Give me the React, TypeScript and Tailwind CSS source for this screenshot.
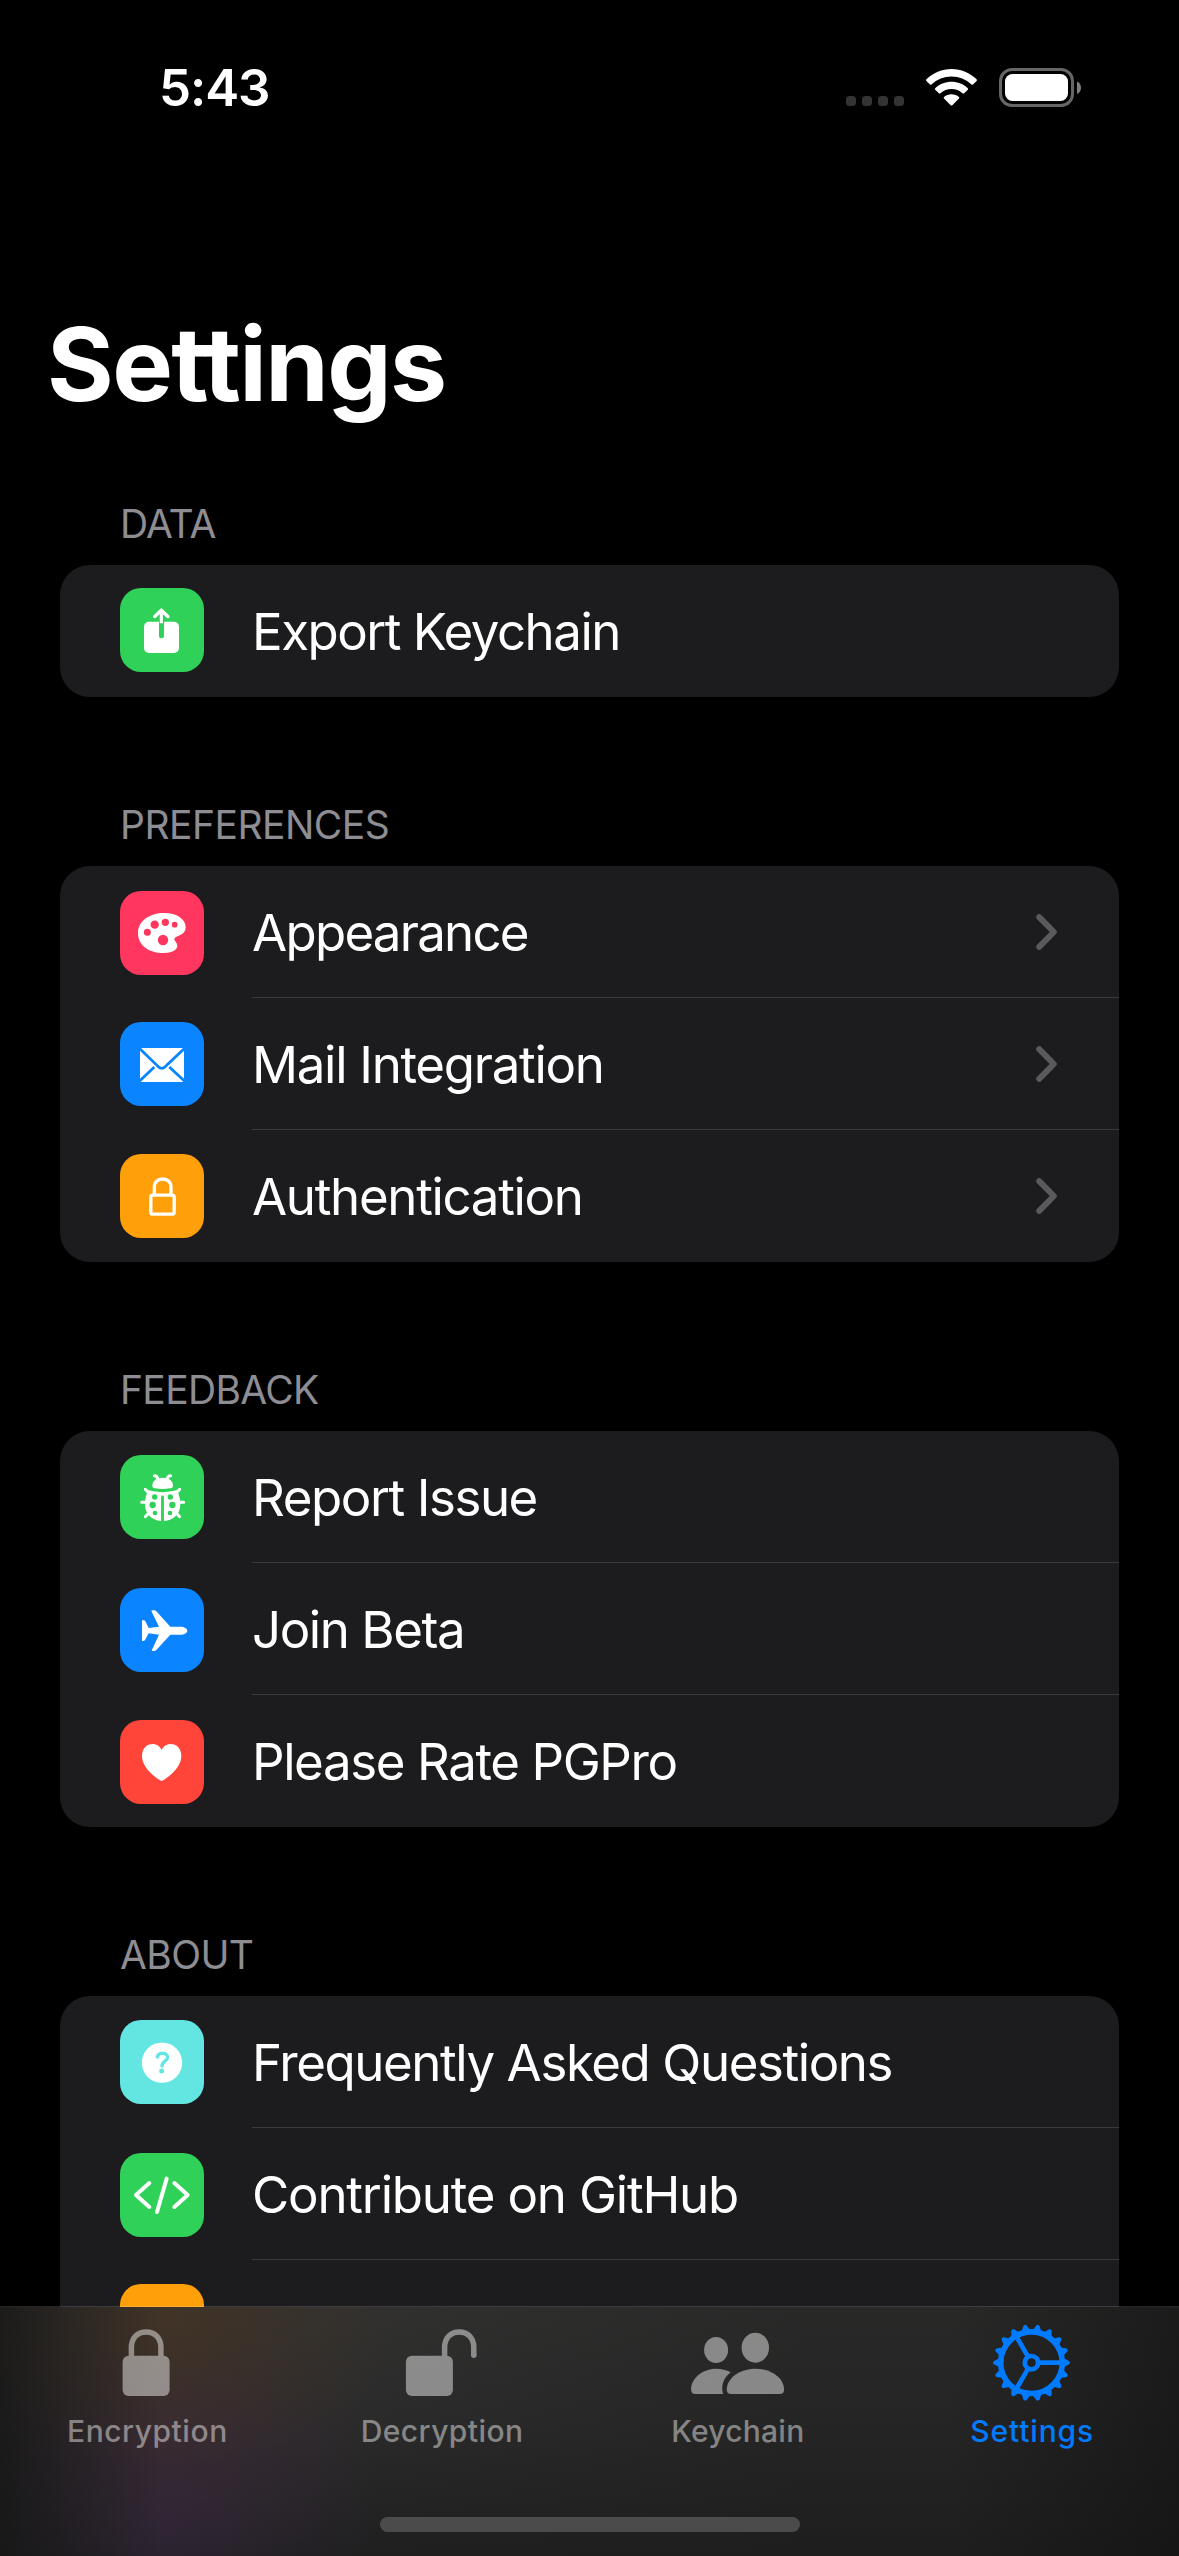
import type { ReactNode } from "react";

const ExportIcon = () => (
  <>
    <rect x="72" y="101" width="105" height="94" rx="15" fill="white" />
    <path d="M124.500 98V143" stroke="#30d158" strokeWidth="15" strokeLinecap="round" />
    <path d="M124 106V68M104 86L124 66L144 86" stroke="white" strokeWidth="9.500" strokeLinejoin="round" fill="none" />
    <path d="M104 86L124 67L144 86" stroke="white" strokeWidth="9.500" strokeLinecap="round" strokeLinejoin="round" fill="none" />
  </>
);

const PaletteIcon = () => (
  <>
    <path
      fill="white"
      d="M133 66C170 66 197 84 197 109C197 127 182 132 170 137C161 141 162 146 167 152C180 167 168 186 130 186C85 186 54 163 54 126C54 90 88 66 133 66Z"
    />
    <g fill="#ff375f">
      <circle cx="82" cy="124" r="10.500" />
      <circle cx="104" cy="101" r="12.500" />
      <circle cx="136" cy="94" r="11" />
      <circle cx="164" cy="101" r="8.500" />
      <circle cx="129" cy="147" r="15.500" />
    </g>
  </>
);

const MailIcon = () => (
  <>
    <rect x="60" y="78" width="132" height="102" rx="5" fill="white" />
    <path
      d="M58 79L111 130Q125 148 140 130L194 79M58 178L103 135M194 178L148 135"
      stroke="#0a84ff"
      strokeWidth="8.500"
      fill="none"
    />
  </>
);

const LockIcon = () => (
  <g fill="none" stroke="white" strokeWidth="10">
    <rect x="92.500" y="123.500" width="70" height="57" rx="6" />
    <path d="M103 122V100C103 84 113 75 128 75C143 75 153 84 153 100V122" />
  </g>
);

const LadybugIcon = () => (
  <>
    <g stroke="white" strokeWidth="9" strokeLinecap="round" fill="none">
      <path d="M103 62Q112 62 114 73M152 62Q143 62 141 73" />
      <path d="M65 142H80M176 142H191M76 103L90 117M179 103L165 117M76 185L90 170M179 185L165 170" />
    </g>
    <path fill="white" d="M97 92C97 78 108 68 128 68C148 68 159 78 159 92C159 98 155 99 150 100Q128 104 106 100C101 99 97 98 97 92Z" />
    <path fill="white" d="M85 106Q128 117 170 106C178 118 181 134 181 147C181 178 160 198 128 198C96 198 75 178 75 147C75 134 78 118 85 106Z" />
    <path d="M127.500 126V200" stroke="#30d158" strokeWidth="8.500" strokeLinecap="round" />
    <g fill="#30d158">
      <circle cx="104" cy="126" r="8" />
      <circle cx="98" cy="150" r="9.500" />
      <circle cx="105" cy="174" r="7" />
      <circle cx="151" cy="126" r="8" />
      <circle cx="157" cy="150" r="9.500" />
      <circle cx="150" cy="174" r="7" />
    </g>
  </>
);

const PlaneIcon = () => (
  <path
    fill="white"
    d="M202 128C202 135 192 140 182 140H151L109 186Q106 189 102 189H97Q94 189 96 185L117 140L86 136L75 156Q73 159 70 159H66V97H71Q74 97 76 100L86 120L117 116L95 71Q93 67 97 67H102Q106 67 109 70L151 116H182C192 116 202 121 202 128Z"
  />
);

const HeartIcon = () => (
  <path
    fill="white"
    d="M125 183C118 181 66 148 66 108C66 86 80 72 98 72C110 72 120 79 125 90C130 79 140 72 152 72C170 72 184 86 184 108C184 148 132 181 125 183Z"
  />
);

const QuestionIcon = () => (
  <>
    <circle cx="126" cy="128" r="60.500" fill="white" />
    <path
      d="M112 111C114 96 143 96 143 112C143 123 126 124 126 138"
      stroke="#63e6e2"
      strokeWidth="10"
      strokeLinecap="round"
      fill="none"
    />
    <circle cx="125" cy="153" r="7.500" fill="#63e6e2" />
  </>
);

const CodeIcon = () => (
  <path
    d="M88 90L48 126L88 162M140 77L111 177M163 90L203 126L163 162"
    stroke="white"
    strokeWidth="12"
    strokeLinecap="round"
    strokeLinejoin="round"
    fill="none"
  />
);

type Item = {
  label: string;
  tracking: string;
  tile: string;
  icon?: ReactNode;
  chevron?: boolean;
};

type Section = { title: string; tracking: string; items: Item[] };

const sections: Section[] = [
  {
    title: "DATA",
    tracking: "tracking-[-0.900px]",
    items: [{ label: "Export Keychain", tracking: "tracking-[-1.500px]", tile: "mt-[23px] bg-[#30d158]", icon: <ExportIcon /> }],
  },
  {
    title: "PREFERENCES",
    tracking: "tracking-[-0.500px]",
    items: [
      { label: "Appearance", tracking: "tracking-[-1.750px]", tile: "mt-[25px] bg-[#ff375f]", icon: <PaletteIcon />, chevron: true },
      { label: "Mail Integration", tracking: "tracking-[-1.300px]", tile: "mt-[24px] bg-[#0a84ff]", icon: <MailIcon />, chevron: true },
      { label: "Authentication", tracking: "tracking-[-1.320px]", tile: "mt-[24px] bg-[#ff9f0a]", icon: <LockIcon />, chevron: true },
    ],
  },
  {
    title: "FEEDBACK",
    tracking: "tracking-[-0.650px]",
    items: [
      { label: "Report Issue", tracking: "tracking-[-1.430px]", tile: "mt-[24px] bg-[#30d158]", icon: <LadybugIcon /> },
      { label: "Join Beta", tracking: "tracking-[-1.450px]", tile: "mt-[25px] bg-[#0a84ff]", icon: <PlaneIcon /> },
      { label: "Please Rate PGPro", tracking: "tracking-[-1.400px]", tile: "mt-[25px] bg-[#ff453a]", icon: <HeartIcon /> },
    ],
  },
  {
    title: "ABOUT",
    tracking: "tracking-[-0.600px]",
    items: [
      { label: "Frequently Asked Questions", tracking: "tracking-[-1.420px]", tile: "mt-[24px] bg-[#63e6e2]", icon: <QuestionIcon /> },
      { label: "Contribute on GitHub", tracking: "tracking-[-1.200px]", tile: "mt-[25px] bg-[#30d158]", icon: <CodeIcon /> },
      { label: "", tracking: "", tile: "mt-[24px] bg-[#ff9f0a]" },
    ],
  },
];

function SettingsRow({ item, last }: { item: Item; last: boolean }) {
  return (
    <div className="flex h-[132px] items-start pl-[60px]">
      <div className={`size-[84px] shrink-0 overflow-hidden rounded-[21px] ${item.tile}`}>
        <svg viewBox="0 0 252 252" className="size-full">
          {item.icon}
        </svg>
      </div>
      <div
        className={`ml-12 flex h-full flex-1 items-center justify-between border-b pr-[62px] ${last ? "border-transparent" : "border-[#3a3a3c]"}`}
      >
        <span className={`mt-[2px] text-[51px] leading-[60px] whitespace-nowrap text-white ${item.tracking}`}>{item.label}</span>
        {item.chevron && (
          <svg width="21" height="36" viewBox="0 0 21 36" fill="none">
            <path d="M3.200 3.200L17.800 18L3.200 32.800" stroke="#5a5a5e" strokeWidth="6" strokeLinecap="round" strokeLinejoin="round" />
          </svg>
        )}
      </div>
    </div>
  );
}

function StatusBar() {
  return (
    <header className="flex h-[177px] items-start justify-between pl-[159px] pr-[97px]">
      <span className="mt-[58px] text-[51px] leading-[60px] font-semibold tracking-[-1.100px] text-white">5:43</span>
      <svg className="mt-[60px]" width="237" height="56" viewBox="0 0 237 56" fill="none">
        <g fill="#333333">
          <rect x="1" y="36" width="10" height="10" rx="3.500" />
          <rect x="17" y="36" width="10" height="10" rx="3.500" />
          <rect x="33" y="36" width="10" height="10" rx="3.500" />
          <rect x="49" y="36" width="10" height="10" rx="3.500" />
        </g>
        <g fill="white">
          <path d="M106.500 9C116 9 125 12.700 131.600 19.300Q132.400 20.100 131.600 20.900L128 24.400Q127.300 25 126.500 24.400C121 19.200 114 16.400 106.500 16.400C99 16.400 92 19.200 86.500 24.400Q85.700 25 85 24.400L81.400 20.900Q80.600 20.100 81.400 19.300C88 12.700 97 9 106.500 9Z" />
          <path d="M106.500 21.700C112.700 21.700 118.500 24 122.800 28.200Q123.500 29 122.800 29.700L119.100 33.300Q118.400 34 117.600 33.300C114.600 30.600 110.700 29.100 106.500 29.100C102.300 29.100 98.400 30.600 95.400 33.300Q94.600 34 93.900 33.300L90.200 29.700Q89.500 29 90.200 28.200C94.500 24 100.300 21.700 106.500 21.700Z" />
          <path d="M106.500 34.300C109.300 34.300 111.900 35.200 114 36.900Q114.800 37.700 114 38.500L107.300 45.200Q106.500 46 105.700 45.200L99 38.500Q98.200 37.700 99 36.900C101.100 35.200 103.700 34.300 106.500 34.300Z" />
        </g>
        <rect x="155.500" y="9.500" width="72" height="36" rx="11.500" stroke="#666666" strokeWidth="3" />
        <rect x="160" y="14" width="63" height="27" rx="7.500" fill="white" />
        <path d="M232 21.500C234.600 22.400 236 24.900 236 27.700C236 30.500 234.600 33 232 33.900Z" fill="#808080" />
      </svg>
    </header>
  );
}

const LockTab = () => (
  <g fill="none" stroke="white" strokeWidth="5.500">
    <rect x="55.600" y="48.700" width="47" height="40.300" rx="6" fill="white" stroke="none" />
    <path d="M64.400 50V40.500C64.400 31 70.500 24.900 79.100 24.900C87.800 24.900 93.900 31 93.900 40.500V50" />
  </g>
);

const UnlockTab = () => (
  <g fill="none" stroke="white" strokeWidth="5.500">
    <rect x="43.900" y="48.700" width="47" height="40.300" rx="6" fill="white" stroke="none" />
    <path d="M82.600 50V40.500C82.600 31 88.700 24.900 97.200 24.900C105.700 24.900 111.800 31 111.800 40.500V48.300" />
    <circle cx="111.800" cy="48.300" r="2.750" fill="white" stroke="none" />
  </g>
);

const PeopleTab = () => (
  <g fill="white">
    <ellipse cx="59.100" cy="43" rx="12" ry="13" />
    <ellipse cx="98.300" cy="40.700" rx="13.700" ry="15" />
    <path d="M38.500 87Q34.100 87 34.100 82.500C34.100 71 46 61.700 59 61.700C64.500 61.700 69.500 63 73.800 65.300C67 70.500 63.500 78 66.100 87Z" />
    <path d="M74.300 87Q69.800 87 69.800 82.500C69.800 71 83 61.700 98.400 61.700C114 61.700 127.100 71 127.100 82.500Q127.100 87 122.600 87Z" />
  </g>
);

const teeth = Array.from({ length: 18 }, (_, i) => i * 20);

const GearTab = () => (
  <g transform="translate(79.500 55.700)" fill="none" stroke="#007aff">
    <circle r="30.800" strokeWidth="5.600" />
    <circle r="6.700" strokeWidth="4.700" />
    <path d="M8 0H29M-4 6.930L-14.500 25.100M-4 -6.930L-14.500 -25.100" strokeWidth="4.700" />
    {teeth.map((a) => (
      <path key={a} d="M32 -4.500L37.200 -1.900Q38.400 -1.300 38.400 0Q38.400 1.300 37.200 1.900L32 4.500Z" transform={`rotate(${a})`} fill="#007aff" stroke="none" />
    ))}
  </g>
);

const tabs = [
  { label: "Encryption", tracking: "tracking-[0.550px]", icon: <LockTab />, active: false },
  { label: "Decryption", tracking: "tracking-[0.450px]", icon: <UnlockTab />, active: false },
  { label: "Keychain", tracking: "pl-[2px] tracking-[0.250px]", icon: <PeopleTab />, active: false },
  { label: "Settings", tracking: "pl-px tracking-[0.850px]", icon: <GearTab />, active: true },
];

function TabBar() {
  return (
    <footer className="absolute inset-x-0 bottom-0 flex h-[250px] flex-col border-t border-white/15 bg-clip-padding">
      <nav className="flex h-full flex-col bg-[linear-gradient(90deg,rgba(22,22,22,0.8),rgba(22,22,22,0.4)_70px,transparent_160px,transparent_950px,rgba(14,14,14,0.5)),radial-gradient(ellipse_240px_150px_at_165px_10px,rgba(80,54,28,0.5),rgba(80,54,28,0.22)_50%,transparent),radial-gradient(ellipse_220px_150px_at_165px_125px,rgba(72,44,54,0.36),rgba(72,44,54,0.16)_50%,transparent),radial-gradient(ellipse_220px_170px_at_165px_215px,rgba(62,40,80,0.4),rgba(62,40,80,0.18)_50%,transparent),linear-gradient(90deg,transparent_350px,rgba(28,28,28,0.4)_800px),linear-gradient(180deg,#313130,#2a2a2a_50%,#1f1f1f)]">
        <div className="grid grid-cols-4">
          {tabs.map((tab) => (
            <div key={tab.label} className="flex flex-col items-center">
              <svg width="160" height="106" viewBox="0 0 160 106" className={tab.active ? "" : "opacity-45"}>
                {tab.icon}
              </svg>
              <span
                className={`text-[30px] leading-9 font-medium ${tab.tracking} ${tab.active ? "text-[#007aff]" : "text-white/45"}`}
              >
                {tab.label}
              </span>
            </div>
          ))}
        </div>
        <div className="mx-auto mt-[68px] h-[15px] w-[420px] rounded-full bg-[#4b4b4b]" />
      </nav>
    </footer>
  );
}

export default function App() {
  return (
    <div className="relative h-[2556px] w-[1179px] overflow-hidden bg-black font-['Inter',sans-serif]">
      <StatusBar />
      <h1 className="mt-[127px] ml-[47px] text-[102px] leading-[120px] font-bold tracking-[-1.600px] text-white">Settings</h1>
      <main className="mt-[75px] flex flex-col gap-[103px] px-[60px]">
        {sections.map((section) => (
          <section key={section.title}>
            <h2 className={`mb-[17px] pt-px pl-[60px] text-[39px] leading-[48px] text-[#8d8d93] ${section.tracking}`}>{section.title}</h2>
            <div className="overflow-hidden rounded-[30px] bg-[#1c1c1e]">
              {section.items.map((item, i) => (
                <SettingsRow key={i} item={item} last={i === section.items.length - 1} />
              ))}
            </div>
          </section>
        ))}
      </main>
      <TabBar />
    </div>
  );
}
